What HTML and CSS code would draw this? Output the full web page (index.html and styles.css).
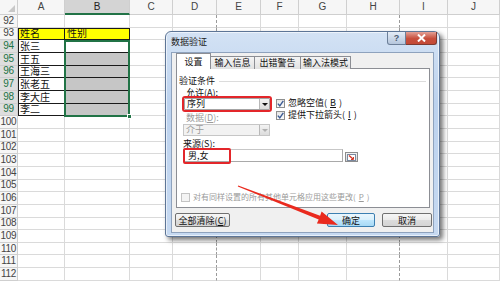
FILE: index.html
```html
<!DOCTYPE html>
<html lang="zh-CN">

<head>
    <meta charset="UTF-8" />
    <title>数据验证</title>
    <link rel="stylesheet" href="styles.css">
</head>

<body>
    <div class="sheet" id="sheet"></div>
    <div class="selection"><span class="handle"></span></div>

    <div class="dialog">
        <div class="titlebar">
            <span class="title">数据验证</span>
            <span class="cap-help">?</span>
            <span class="cap-close">
                <svg width="11" height="8" viewBox="0 0 11 8"><path d="M2 0.5 L9 7.5 M9 0.5 L2 7.5" stroke="#fff" stroke-width="2"/></svg>
            </span>
        </div>
        <div class="client">
            <div class="tabs">
                <span class="tab active">设置</span>
                <span class="tab w44">输入信息</span>
                <span class="tab w46">出错警告</span>
                <span class="tab w50">输入法模式</span>
            </div>
            <div class="panel">
                <div class="group-title"><span>验证条件</span><i></i></div>
                <div class="criteria">
                    <div class="left-col">
                        <span class="lbl">允许(<u>A</u>):</span>
                        <div class="combo marked"><span>序列</span><b class="drop"></b></div>
                        <span class="lbl off">数据(<u>D</u>):</span>
                        <div class="combo disabled"><span>介于</span><b class="drop"></b></div>
                    </div>
                    <div class="checks">
                        <div class="check"><span class="box"><svg width="7" height="7" viewBox="0 0 7 7"><path d="M0.8 3.6 L2.8 5.8 L6.3 0.8" fill="none" stroke="#3c5b94" stroke-width="1.4"/></svg></span>忽略空值(<u>B</u>)</div>
                        <div class="check"><span class="box"><svg width="7" height="7" viewBox="0 0 7 7"><path d="M0.8 3.6 L2.8 5.8 L6.3 0.8" fill="none" stroke="#3c5b94" stroke-width="1.4"/></svg></span>提供下拉箭头(<u>I</u>)</div>
                    </div>
                </div>
                <span class="lbl src-lbl">来源(<u>S</u>):</span>
                <div class="source">
                    <div class="src-input">男,女<span class="mark"></span></div>
                    <span class="picker">
                        <svg width="9" height="7" viewBox="0 0 9 7"><rect x="0.5" y="0.5" width="8" height="6" fill="#fff" stroke="#7a8aa0"/><path d="M2 1.5 L6 5" stroke="#d23a2a" stroke-width="1.4"/><path d="M4 5.5 L6.5 5.5 L6.5 3" fill="none" stroke="#d23a2a" stroke-width="1"/></svg>
                    </span>
                </div>
                <div class="check off apply"><span class="box"></span>对有同样设置的所有其他单元格应用这些更改(<u>P</u>)</div>
            </div>
            <div class="buttons">
                <button>全部清除(<u>C</u>)</button>
                <span class="spacer"></span>
                <button class="default">确定</button>
                <button class="cancel">取消</button>
            </div>
        </div>
    </div>

    <svg class="arrow" width="500" height="281" viewBox="0 0 500 281">
        <polygon points="238.2,185.4 320.1,215.8 321.6,211.6 338,225 316.9,223.6 318.7,219.6 237.8,186.6" fill="#ea2a1e"/>
    </svg>

    <script>
        const cols = ["A", "B", "C", "D", "E", "F", "G", "H", "I", "J"];
        const data = {
            "93A": "姓名", "93B": "性别",
            "94A": "张三", "95A": "王五", "96A": "王海三",
            "97A": "张老五", "98A": "李大庄", "99A": "李二"
        };
        const sheet = document.getElementById("sheet");

        function add(cls, text) {
            const d = document.createElement("div");
            d.className = cls;
            if (text) {
                const s = document.createElement("span");
                s.textContent = text;
                d.appendChild(s);
            }
            sheet.appendChild(d);
        }

        add("hd corner");
        cols.forEach(c => add(c == "B" ? "hd col-sel" : "hd", c));

        for (let r = 92; r <= 112; r++) {
            add(r >= 94 && r <= 99 ? "rh row-sel" : "rh", String(r));
            cols.forEach(c => {
                let cls = "c";
                const inTable = r >= 93 && r <= 99 && (c == "A" || c == "B");
                if (inTable) cls += " tb";
                if (inTable && c == "A") cls += " tl";
                if (r == 93 && inTable) cls += " tt yellow";
                if (r == 93 && c == "A") cls += " tlt";
                if (c == "B" && r >= 95 && r <= 99) cls += " gray";
                if (c == "D" || c == "H") cls += " pb";
                add(cls, data[r + c]);
            });
        }
    </script>
</body>

</html>
```

FILE: styles.css
```css
* {
    box-sizing: border-box;
}

body {
    margin: 0;
    width: 500px;
    height: 281px;
    overflow: hidden;
    position: relative;
    background: #fff;
    font-family: "Liberation Sans", "Noto Sans CJK SC", sans-serif;
}

/* ---------- worksheet ---------- */

.sheet {
    display: grid;
    grid-template-columns: 18px 47px 65px 43px 44px 44px 38px 48px 53px 48px 52px;
    grid-template-rows: 15px repeat(21, 12.667px);
}

.hd,
.rh,
.c {
    border-right: 1px solid #dadada;
    border-bottom: 1px solid #dadada;
    white-space: nowrap;
    display: flex;
    align-items: center;
}

.hd {
    background: #f6f6f6;
    border-color: #cfcfcf;
    color: #444;
    font-size: 10px;
    line-height: 10px;
    justify-content: center;
}

.corner {
    position: relative;
}

.corner::after {
    content: "";
    position: absolute;
    right: 2px;
    bottom: 2px;
    border-left: 7px solid transparent;
    border-bottom: 7px solid #c8c8c8;
}

.col-sel {
    background: #d4d4d4;
    border-bottom: 2px solid #217346;
    color: #222;
}

.rh {
    background: #f6f6f6;
    border-color: #cfcfcf;
    color: #444;
    font-size: 10px;
    line-height: 10px;
    justify-content: center;
    letter-spacing: -0.3px;
}

.row-sel {
    background: #dedede;
    color: #217346;
}

.c {
    font-family: "Noto Sans CJK SC", sans-serif;
    font-size: 10px;
    line-height: 10px;
    padding-left: 2px;
    color: #111;
}

.c.pb {
    border-right: 1px dashed #9a9a9a;
}

.c.tb {
    border-right-color: #1a1a1a;
    border-bottom-color: #1a1a1a;
}

.c.tl {
    box-shadow: inset 1px 0 #1a1a1a;
}

.c.tt {
    box-shadow: inset 0 1px #1a1a1a;
}

.c.tlt {
    box-shadow: inset 1px 1px #1a1a1a;
}

.c.yellow {
    background: #ffff00;
}

.c.gray {
    background: #c6c6c6;
}

.selection {
    position: absolute;
    left: 64px;
    top: 40px;
    width: 66px;
    height: 77px;
    border: 2px solid #217346;
}

.handle {
    position: absolute;
    right: -4px;
    bottom: -4px;
    width: 5px;
    height: 5px;
    background: #217346;
    border: 1px solid #fff;
}

/* ---------- dialog ---------- */

.dialog {
    position: absolute;
    left: 165px;
    top: 31px;
    width: 275px;
    height: 206px;
    display: flex;
    flex-direction: column;
    background: linear-gradient(180deg, #d3e2f4 0%, #bcd2ee 35%, #c6d9f1 100%);
    border: 1px solid #5d7596;
    border-radius: 6px 6px 3px 3px;
    box-shadow: 3px 3px 5px rgba(0, 0, 0, 0.55), inset 0 0 0 1px rgba(255, 255, 255, 0.6);
    font-family: "Noto Sans CJK SC", sans-serif;
    font-size: 9px;
    color: #111;
}

.titlebar {
    height: 20px;
    display: flex;
    align-items: flex-start;
}

.title {
    flex: 1;
    padding: 5px 0 0 5px;
    line-height: 10px;
    font-size: 9px;
    color: #222;
}

.cap-help,
.cap-close {
    height: 13px;
    display: flex;
    align-items: center;
    justify-content: center;
    border: 1px solid #6c7f98;
    border-top: none;
}

.cap-help {
    width: 19px;
    background: linear-gradient(180deg, #e4ecf6, #b5c6dc);
    border-radius: 0 0 0 3px;
    color: #4a5a70;
    font-family: "Liberation Sans", sans-serif;
    font-size: 9px;
    font-weight: bold;
    line-height: 13px;
}

.cap-close {
    width: 31px;
    margin-right: 2px;
    background: linear-gradient(180deg, #e3a196, #c74e3c 55%, #c44a36);
    border-color: #7e3a30;
    border-left: none;
    border-radius: 0 0 3px 0;
}

.client {
    flex: 1;
    margin: 0 5px 3px 5px;
    display: flex;
    flex-direction: column;
    background: #f0f0f0;
    border: 1px solid #8ea2bd;
}

.tabs {
    display: flex;
    align-items: flex-end;
    padding-left: 4px;
    height: 15px;
}

.tab {
    height: 13px;
    line-height: 12px;
    text-align: center;
    background: linear-gradient(180deg, #f4f4f4, #e2e2e2);
    border: 1px solid #8c8e94;
    border-bottom: none;
    margin-bottom: -1px;
    position: relative;
}

.tab + .tab {
    border-left: none;
}

.w44 {
    width: 44px;
}

.w46 {
    width: 46px;
}

.w50 {
    width: 50px;
}

.tab.active {
    height: 16px;
    width: 35px;
    padding-top: 2px;
    background: #fff;
    z-index: 1;
}

.panel {
    height: 140px;
    margin: 0 3px 0 4px;
    background: #fff;
    border: 1px solid #8c8e94;
    display: flex;
    flex-direction: column;
}

.group-title {
    display: flex;
    align-items: center;
    margin-top: 7px;
    padding: 0 3px 0 2px;
    line-height: 10px;
}

.group-title i {
    flex: 1;
    height: 1px;
    margin-left: 4px;
    background: #dcdcdc;
}

.criteria {
    display: flex;
    margin: 2px 0 0 6px;
}

.left-col {
    display: flex;
    flex-direction: column;
    width: 87px;
}

.lbl {
    line-height: 10px;
    padding-left: 3px;
}

.lbl.off {
    color: #9a9a9a;
    margin-top: 3px;
}

.combo {
    height: 12px;
    display: flex;
    align-items: center;
    justify-content: space-between;
    background: #fff;
    border: 1px solid #a4a4a4;
    padding-left: 2px;
    line-height: 10px;
}

.combo.marked {
    margin-left: 1px;
    outline: 2px solid #e3262a;
    border-radius: 1px;
}

.combo.disabled {
    margin-top: 1px;
    background: #f2f2f2;
    border-color: #c6c6c6;
    color: #9a9a9a;
}

.drop {
    width: 10px;
    height: 10px;
    background: linear-gradient(180deg, #f3f3f3, #dcdcdc);
    border-left: 1px solid #b8b8b8;
    position: relative;
}

.drop::after {
    content: "";
    position: absolute;
    left: 2px;
    top: 4px;
    border-left: 3px solid transparent;
    border-right: 3px solid transparent;
    border-top: 3px solid #111;
}

.combo.disabled .drop::after {
    border-top-color: #b0b0b0;
}

.checks {
    display: flex;
    flex-direction: column;
    padding: 9px 0 0 6px;
}

.check {
    height: 12px;
    display: flex;
    align-items: center;
    gap: 3px;
    line-height: 10px;
}

.box {
    width: 9px;
    height: 9px;
    display: flex;
    align-items: center;
    justify-content: center;
    background: linear-gradient(180deg, #e6e6e6, #fbfbfb);
    border: 1px solid #8e8f8f;
}

.src-lbl {
    margin: 3px 0 0 6px;
    padding-left: 0;
}

.source {
    display: flex;
    align-items: flex-end;
    margin: 0 0 0 6px;
}

.src-input {
    position: relative;
    width: 160px;
    height: 13px;
    padding-left: 4px;
    line-height: 12px;
    background: #fff;
    border: 1px solid #a9a9a9;
    border-left-color: #d4d4d4;
    border-top-color: #c7c7c7;
}

.mark {
    position: absolute;
    left: -1px;
    top: -2px;
    width: 48px;
    height: 16px;
    border: 2px solid #e3262a;
    border-radius: 2px;
}

.picker {
    width: 13px;
    height: 10px;
    margin-left: 2px;
    display: flex;
    align-items: center;
    justify-content: center;
    background: linear-gradient(180deg, #f4f4f4, #d8d8d8);
    border: 1px solid #8d8d8d;
}

.check.apply {
    margin: auto 0 4px 4px;
    font-size: 8px;
}

.check.off {
    color: #9a9a9a;
}

.check.off .box {
    border-color: #c4c4c4;
    background: #f4f4f4;
}

.buttons {
    display: flex;
    gap: 7px;
    margin-top: 5px;
    padding: 0 1px 0 3px;
}

.spacer {
    flex: 1;
}

button {
    height: 14px;
    padding: 0;
    font-family: "Noto Sans CJK SC", sans-serif;
    font-size: 9px;
    line-height: 11px;
    color: #111;
    background: linear-gradient(180deg, #f6f6f6 0%, #ebebeb 50%, #dcdcdc 51%, #d4d4d4 100%);
    border: 1px solid #707070;
    border-radius: 2px;
}

button:first-child {
    width: 55px;
}

button.default {
    width: 48px;
    border-color: #3c7fb1;
    background: linear-gradient(180deg, #eaf6fd 0%, #d9f0fc 50%, #bee6fd 51%, #a7d9f5 100%);
}

button.cancel {
    width: 50px;
}

.arrow {
    position: absolute;
    left: 0;
    top: 0;
    pointer-events: none;
}
```
